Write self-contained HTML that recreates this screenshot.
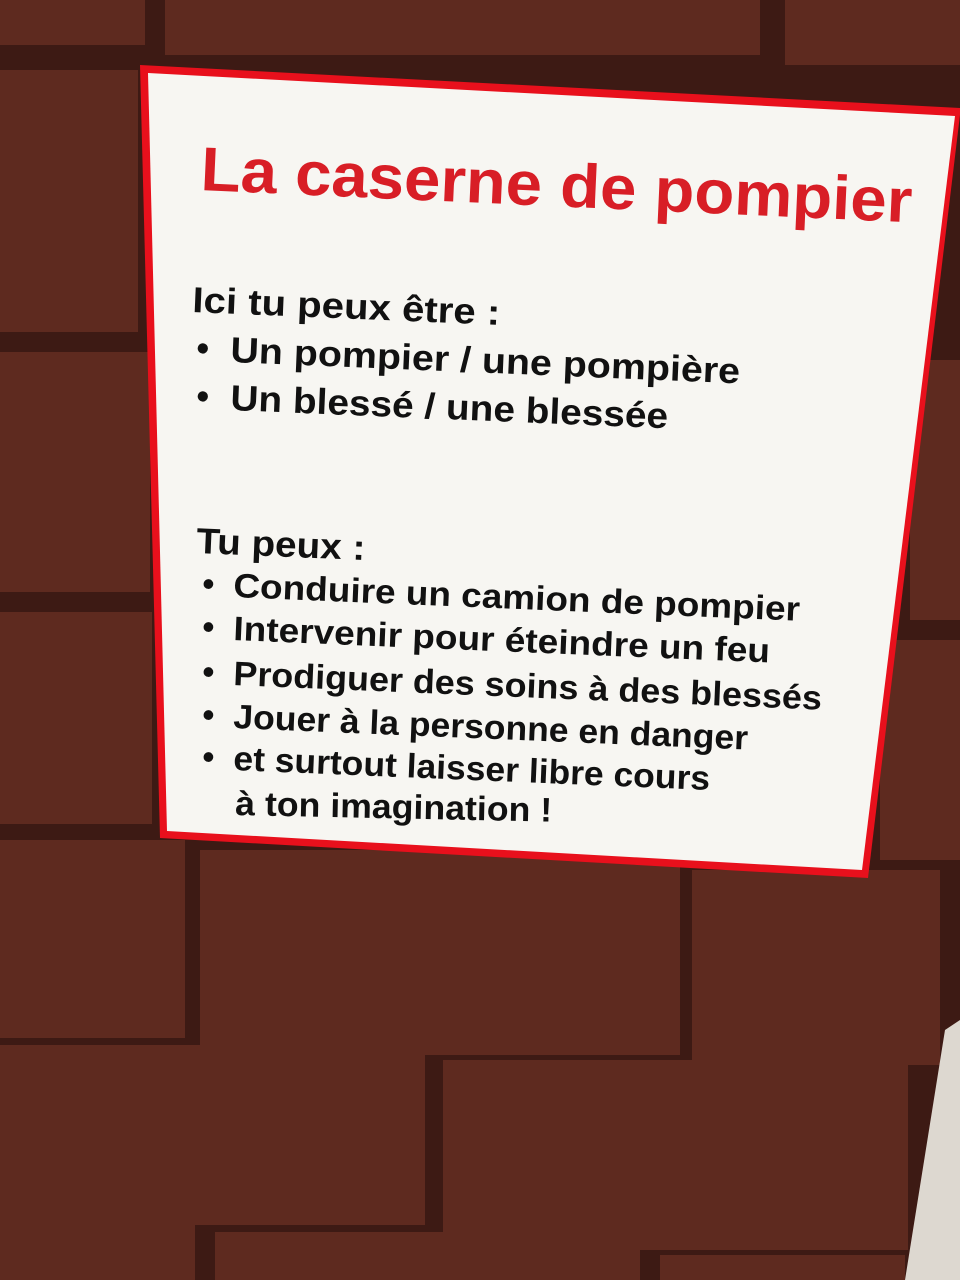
<!DOCTYPE html>
<html><head><meta charset="utf-8"><style>
html,body{margin:0;padding:0;width:960px;height:1280px;overflow:hidden;background:#3f1b15}
svg{display:block}
text{font-family:"Liberation Sans Narrow","Liberation Sans",sans-serif;font-weight:bold}
</style></head><body>
<svg width="960" height="1280" viewBox="0 0 960 1280" xmlns="http://www.w3.org/2000/svg">
<rect width="960" height="1280" fill="#3d1a14"/>
<g fill="#5e2a1f">
<rect x="0" y="0" width="145" height="45"/>
<rect x="165" y="0" width="595" height="55"/>
<rect x="785" y="0" width="175" height="65"/>
<rect x="0" y="70" width="138" height="262"/>
<rect x="0" y="352" width="150" height="240"/>
<rect x="0" y="612" width="152" height="212"/>
<rect x="910" y="360" width="50" height="260"/>
<rect x="880" y="640" width="80" height="220"/>
<rect x="0" y="840" width="185" height="198"/>
<rect x="200" y="850" width="480" height="205"/>
<rect x="692" y="870" width="248" height="195"/>
<rect x="0" y="1045" width="425" height="180"/>
<rect x="443" y="1060" width="465" height="190"/>
<rect x="0" y="1222" width="195" height="58"/>
<rect x="215" y="1232" width="425" height="48"/>
<rect x="660" y="1255" width="245" height="25"/>
</g>
<polygon points="945,1030 960,1020 960,1280 905,1280" fill="#ddd8d0"/>
<polygon points="140,65 960,108 960,115 868,878 160,838" fill="#e8101c"/>
<polygon points="148,73 955,116 862,870 167,831" fill="#f7f6f2"/>
<g fill="#d81e26"><text font-size="62" transform="translate(200,190) rotate(2.6)" textLength="712" lengthAdjust="spacingAndGlyphs">La caserne de pompier</text></g>
<g fill="#111">
<text font-size="36" transform="translate(192,312) rotate(2.4)" textLength="308" lengthAdjust="spacingAndGlyphs">Ici tu peux être :</text>
<text font-size="36" transform="translate(196,360) rotate(2.4)">•</text>
<text font-size="36" transform="translate(230,362) rotate(2.4)" textLength="510" lengthAdjust="spacingAndGlyphs">Un pompier / une pompière</text>
<text font-size="36" transform="translate(196,408) rotate(2.4)">•</text>
<text font-size="36" transform="translate(230,410) rotate(2.4)" textLength="438" lengthAdjust="spacingAndGlyphs">Un blessé / une blessée</text>
<text font-size="36" transform="translate(196,553) rotate(2.4)" textLength="169" lengthAdjust="spacingAndGlyphs">Tu peux :</text>
<text font-size="34" transform="translate(202,595) rotate(2.4)">•</text>
<text font-size="34" transform="translate(233,597) rotate(2.4)" textLength="567" lengthAdjust="spacingAndGlyphs">Conduire un camion de pompier</text>
<text font-size="34" transform="translate(202,638) rotate(2.4)">•</text>
<text font-size="34" transform="translate(233,640) rotate(2.4)" textLength="537" lengthAdjust="spacingAndGlyphs">Intervenir pour éteindre un feu</text>
<text font-size="34" transform="translate(202,683) rotate(2.4)">•</text>
<text font-size="34" transform="translate(233,685) rotate(2.4)" textLength="589" lengthAdjust="spacingAndGlyphs">Prodiguer des soins à des blessés</text>
<text font-size="34" transform="translate(202,726) rotate(2.4)">•</text>
<text font-size="34" transform="translate(233,728) rotate(2.4)" textLength="515" lengthAdjust="spacingAndGlyphs">Jouer à la personne en danger</text>
<text font-size="34" transform="translate(202,768) rotate(2.4)">•</text>
<text font-size="34" transform="translate(233,770) rotate(2.4)" textLength="477" lengthAdjust="spacingAndGlyphs">et surtout laisser libre cours</text>
<text font-size="34" transform="translate(235,815) rotate(1.2)" textLength="317" lengthAdjust="spacingAndGlyphs">à ton imagination !</text>
</g>
</svg>
</body></html>
